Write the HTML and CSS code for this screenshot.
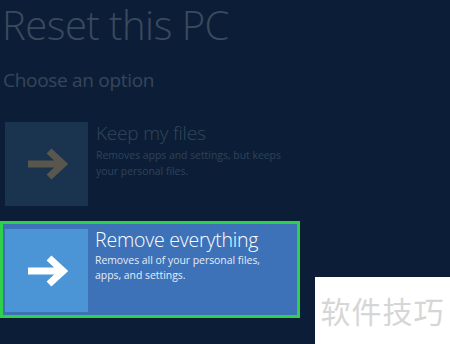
FILE: index.html
```html
<!DOCTYPE html>
<html lang="en">
<head>
    <meta charset="UTF-8">
    <meta name="viewport" content="width=device-width, initial-scale=1.0">
    <title>Reset this PC</title>
    <link rel="stylesheet" href="styles.css">
</head>
<body>

    <div class="screen">
        <h1 class="title">Reset this PC</h1>
        <h2 class="subtitle">Choose an option</h2>

        <!-- Option: keep files -->
        <div class="option option-keep">
            <div class="tile">
                <svg width="42" height="34" viewBox="0 0 42 34">
                    <path d="M2 17 H36 M23 4 L37 17 L23 30" fill="none" stroke="currentColor" stroke-width="7" stroke-linejoin="miter"/>
                </svg>
            </div>
            <div class="option-text">
                <div class="option-name">Keep my files</div>
                <div class="option-desc">Removes apps and settings, but keeps<br>your personal files.</div>
            </div>
        </div>

        <!-- Option: remove everything (selected) -->
        <div class="option option-remove">
            <div class="tile">
                <svg width="42" height="34" viewBox="0 0 42 34">
                    <path d="M2 17 H36 M23 4 L37 17 L23 30" fill="none" stroke="currentColor" stroke-width="7" stroke-linejoin="miter"/>
                </svg>
            </div>
            <div class="option-text">
                <div class="option-name">Remove everything</div>
                <div class="option-desc">Removes all of your personal files,<br>apps, and settings.</div>
            </div>
        </div>
    </div>

    <div class="watermark">软件技巧</div>

</body>
</html>
```

FILE: styles.css
```css
body {
    margin: 0;
    padding: 0;
    background-color: #0c1e37;
    font-family: "Open Sans", "Noto Sans", sans-serif;
    width: 450px;
    height: 344px;
    overflow: hidden;
    position: relative;
}

.screen {
    padding-top: 2px;
}

.title {
    margin: 0 0 0 2px;
    font-weight: 300;
    font-size: 40px;
    line-height: 46px;
    color: #3a4a5d;
    letter-spacing: -0.5px;
}

.subtitle {
    margin: 20px 0 0 3px;
    font-weight: 400;
    font-size: 19px;
    line-height: 24px;
    color: #35465a;
    letter-spacing: -0.3px;
}

.option {
    display: flex;
    align-items: flex-start;
    gap: 8px;
}

.tile {
    width: 83px;
    height: 84px;
    display: flex;
    align-items: center;
    justify-content: center;
    flex-shrink: 0;
}

.option-name {
    font-size: 19px;
    font-weight: 300;
    line-height: 22px;
    letter-spacing: -0.2px;
}

.option-desc {
    font-size: 10.4px;
    line-height: 16px;
    margin-top: 3px;
}

/* keep my files */
.option-keep {
    margin: 30px 0 0 5px;
}

.option-keep .tile {
    background-color: #1a344f;
    color: #59574d;
}

.option-keep .option-name {
    color: #324659;
}

.option-keep .option-desc {
    color: #2e4358;
}

/* remove everything */
.option-remove {
    margin-top: 15px;
    width: 292px;
    height: 86px;
    border: 3px solid #2fd14b;
    background-color: #3d72b9;
    padding: 5px 0 0 2px;
    gap: 7px;
}

.option-remove .tile {
    height: 83px;
    background-color: #4b94d5;
    color: #ffffff;
}

.option-remove .option-name {
    color: #ffffff;
    font-size: 19.5px;
}

.option-remove .option-desc {
    color: #e6edf6;
    margin-top: 2px;
    line-height: 15px;
}

.watermark {
    position: absolute;
    left: 315px;
    top: 277px;
    width: 135px;
    height: 67px;
    background-color: #ffffff;
    color: #d6d6d6;
    font-family: "Noto Sans CJK SC", sans-serif;
    font-size: 30px;
    line-height: 67px;
    text-align: center;
    letter-spacing: 1px;
}
```
